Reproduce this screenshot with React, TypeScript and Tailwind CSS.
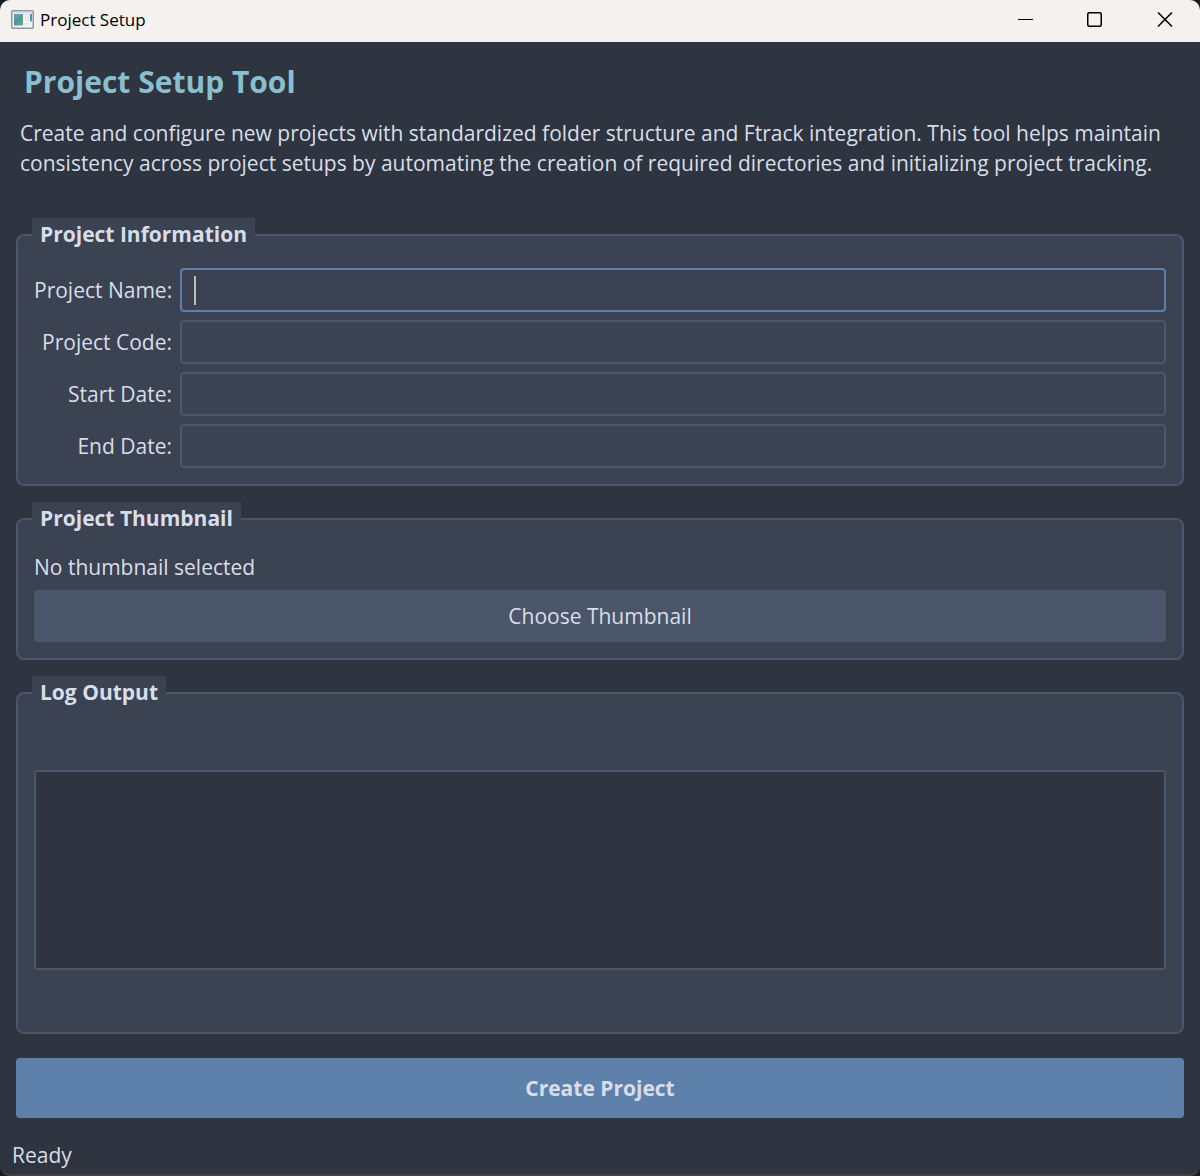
import { useState } from "react";
import type { ReactNode } from "react";

function AppIcon() {
  return (
    <svg width="24" height="20" viewBox="0 0 24 20" aria-hidden="true">
      <defs>
        <linearGradient id="pane" x1="0" y1="0" x2="1" y2="1">
          <stop offset="0" stopColor="#3f7fae" />
          <stop offset="1" stopColor="#5fb37e" />
        </linearGradient>
      </defs>
      <rect x="0.75" y="0.75" width="21.5" height="17.5" rx="1" fill="#f4f6f8" stroke="#8f969d" strokeWidth="1.5" />
      <rect x="2" y="2" width="19" height="1.5" fill="#d5dbe2" />
      <rect x="3" y="4" width="9" height="11.5" fill="url(#pane)" />
      <path d="M3 4H12L3 10Z" fill="#ffffff" fillOpacity="0.18" />
      <rect x="13.5" y="4" width="4.5" height="7" fill="#e6e9ec" />
      <rect x="19" y="4" width="2" height="7.5" fill="url(#pane)" />
      <rect x="13.5" y="12.5" width="4.5" height="3" fill="#e6e9ec" />
    </svg>
  );
}

function TitleBar() {
  return (
    <header className="flex h-[42px] shrink-0 items-start justify-between bg-[#f4f1ee] pl-[11px] text-black">
      <div className="flex h-[39px] items-center gap-[5px]">
        <AppIcon />
        <span className="text-[17px] leading-6">Project Setup</span>
      </div>
      <div className="flex">
        <button type="button" aria-label="Minimize" className="flex h-[39px] w-[69px] items-center justify-center">
          <svg width="16" height="16" viewBox="0 0 16 16" fill="none" stroke="#000" aria-hidden="true">
            <path d="M0 7.5H15" />
          </svg>
        </button>
        <button type="button" aria-label="Maximize" className="flex h-[39px] w-[69px] items-center justify-center">
          <svg width="16" height="16" viewBox="0 0 16 16" fill="none" stroke="#000" strokeWidth="1.5" aria-hidden="true">
            <rect x="0.75" y="0.75" width="13.5" height="13.5" rx="1.5" />
          </svg>
        </button>
        <button type="button" aria-label="Close" className="flex h-[39px] w-[71px] items-center justify-center">
          <svg width="16" height="16" viewBox="0 0 16 16" fill="none" stroke="#000" strokeWidth="1.5" aria-hidden="true">
            <path d="M1 0.5L15 14.5M15 0.5L1 14.5" />
          </svg>
        </button>
      </div>
    </header>
  );
}

function Group({ title, grow = false, children }: { title: string; grow?: boolean; children: ReactNode }) {
  return (
    <fieldset
      className={
        grow
          ? "flex-1 rounded-lg border-2 border-[#4c566a] bg-[#3b4252] px-4 pt-[60px] pb-[62px]"
          : "rounded-lg border-2 border-[#4c566a] bg-[#3b4252] p-4"
      }
    >
      <legend className="-ml-0.5 h-[34px] bg-[#3b4252] px-2 leading-8 font-bold">{title}</legend>
      {children}
    </fieldset>
  );
}

const fields = [
  { id: "project-name", label: "Project Name:" },
  { id: "project-code", label: "Project Code:" },
  { id: "start-date", label: "Start Date:" },
  { id: "end-date", label: "End Date:" },
];

export default function App() {
  const [name, setName] = useState("");

  return (
    <div className="bg-[#1d1c1c]">
      <div className="flex min-h-screen flex-col overflow-hidden rounded-[10px] border-b-2 border-[#454343] bg-[#2e3440] font-['Open_Sans','Noto_Sans',sans-serif] text-[21px] leading-[30px] text-[#d8dee9]">
        <TitleBar />
        <main className="flex flex-1 flex-col gap-4 px-4 pt-4">
          <div className="px-1 pb-6">
            <h1 className="px-1 text-[30px] leading-[47px] font-bold text-[#88c0d0]">Project Setup Tool</h1>
            <p className="pt-[13px]">
              Create and configure new projects with standardized folder structure and Ftrack integration. This tool
              helps maintain consistency across project setups by automating the creation of required directories and
              initializing project tracking.
            </p>
          </div>

          <Group title="Project Information">
            <div className="grid grid-cols-[138px_1fr] items-center gap-2">
              {fields.map(({ id, label }, i) => (
                <div key={id} className="contents">
                  <label htmlFor={id} className="text-right whitespace-nowrap">
                    {label}
                  </label>
                  {i === 0 ? (
                    <div className="relative">
                      <input
                        id={id}
                        type="text"
                        value={name}
                        onChange={(e) => setName(e.target.value)}
                        className="block h-11 w-full rounded border-2 border-[#5e81ac] bg-[#3b4252] px-3 outline-none"
                      />
                      {name === "" && (
                        <span className="pointer-events-none absolute top-2 left-[14px] h-[29px] w-0.5 bg-[#c4bdad]" />
                      )}
                    </div>
                  ) : (
                    <input
                      id={id}
                      type="text"
                      className="block h-11 w-full rounded border-2 border-[#4c566a] bg-[#3b4252] px-3 outline-none focus:border-[#5e81ac]"
                    />
                  )}
                </div>
              ))}
            </div>
          </Group>

          <Group title="Project Thumbnail">
            <p>No thumbnail selected</p>
            <button type="button" className="mt-2 block h-[52px] w-full rounded bg-[#4c566a]">
              Choose Thumbnail
            </button>
          </Group>

          <Group title="Log Output" grow>
            <textarea
              readOnly
              aria-label="Log Output"
              className="block h-[200px] w-full resize-none rounded border-2 border-[#4c566a] bg-[#2e3440] p-2 outline-none"
            />
          </Group>

          <button type="button" className="mt-2 h-[60px] shrink-0 rounded bg-[#5e81ac] font-bold">
            Create Project
          </button>
        </main>
        <footer className="px-3 pt-[22px] pb-1">Ready</footer>
      </div>
    </div>
  );
}
